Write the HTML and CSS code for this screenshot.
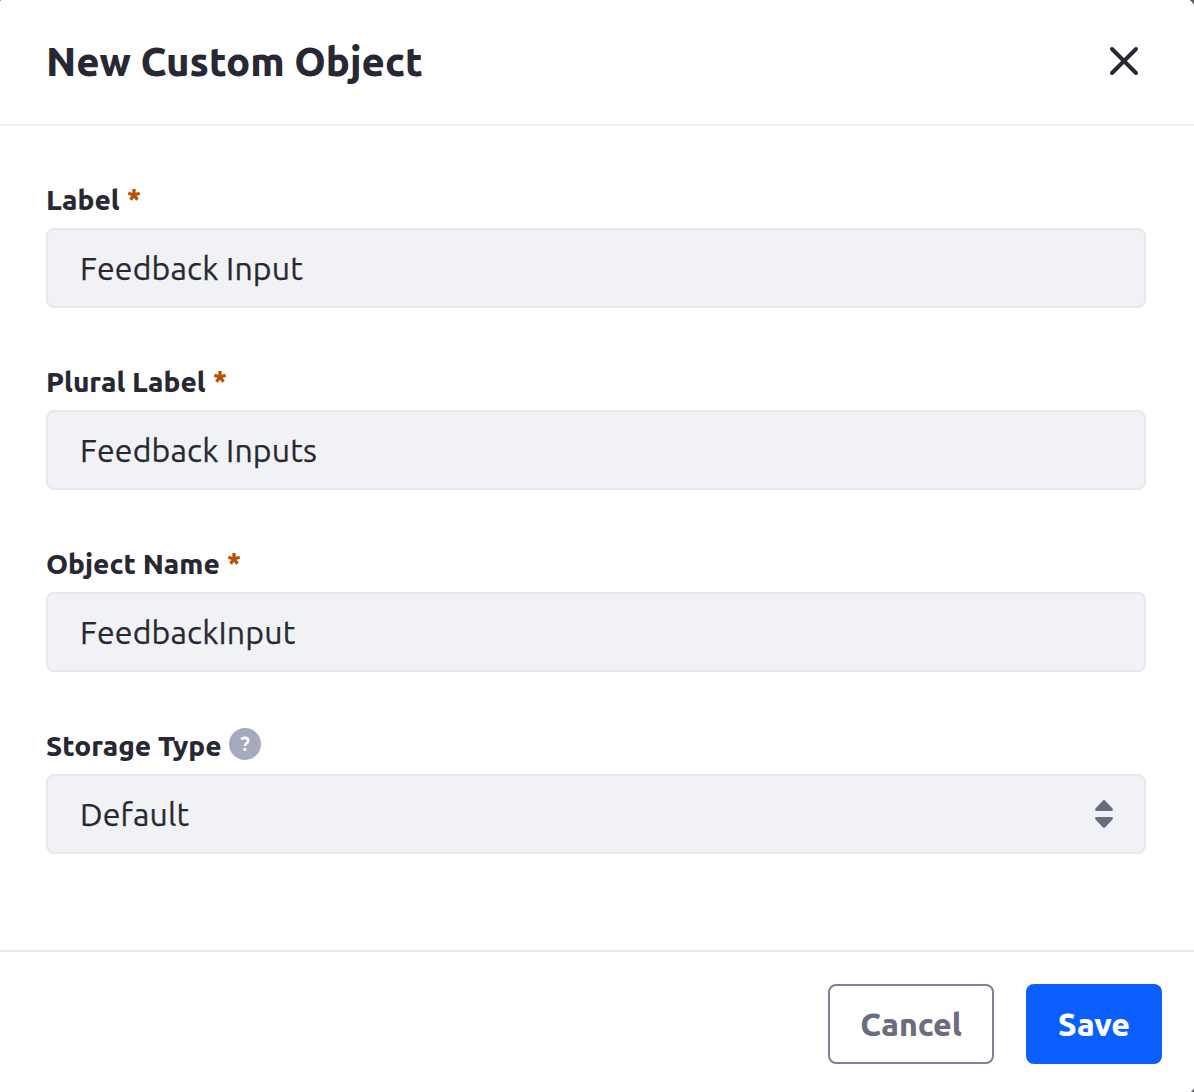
FILE: index.html
```html
<!DOCTYPE html>
<html lang="en">
<head>
<meta charset="utf-8">
<title>New Custom Object</title>
<link rel="stylesheet" href="styles.css">
</head>
<body>
<form class="modal">
  <header class="modal-header">
    <h1 class="modal-title">New Custom Object</h1>
    <button class="close" type="button" aria-label="Close">
      <svg width="32" height="32" viewBox="0 0 32 32"><path d="M4 4L28 28M28 4L4 28"/></svg>
    </button>
  </header>
  <main class="modal-body">
    <div class="field">
      <label class="field-label"><span>Label</span><svg class="required" viewBox="0 0 12 12"><path d="M6 6V0M6 6L.3 4.2M6 6L11.7 4.2M6 6L2.5 10.7M6 6L9.5 10.7"/></svg></label>
      <div class="control"><span>Feedback Input</span></div>
    </div>
    <div class="field">
      <label class="field-label"><span>Plural Label</span><svg class="required" viewBox="0 0 12 12"><path d="M6 6V0M6 6L.3 4.2M6 6L11.7 4.2M6 6L2.5 10.7M6 6L9.5 10.7"/></svg></label>
      <div class="control"><span>Feedback Inputs</span></div>
    </div>
    <div class="field">
      <label class="field-label"><span>Object Name</span><svg class="required" viewBox="0 0 12 12"><path d="M6 6V0M6 6L.3 4.2M6 6L11.7 4.2M6 6L2.5 10.7M6 6L9.5 10.7"/></svg></label>
      <div class="control"><span>FeedbackInput</span></div>
    </div>
    <div class="field">
      <label class="field-label"><span>Storage Type</span><svg class="help" viewBox="0 0 32 32"><circle cx="16" cy="16" r="16"/><path d="M12.2 11.4C13 10.3 14.3 9.9 15.8 9.9C18 9.9 19.3 11 19.3 12.7C19.3 15.1 15.9 15.2 15.9 18.1"/><rect x="14.4" y="20.1" width="3" height="3" rx=".8"/></svg></label>
      <div class="control"><span>Default</span>
        <svg class="arrows" width="18" height="28" viewBox="0 0 18 28"><path d="M8 .5Q9 -.4 10 .5L17.5 8.6Q18.6 11 16.5 11H1.5Q-.6 11 .5 8.6ZM8 27.5Q9 28.4 10 27.5L17.5 19.4Q18.6 17 16.5 17H1.5Q-.6 17 .5 19.4Z"/></svg>
      </div>
    </div>
  </main>
  <footer class="modal-footer">
    <button class="button cancel" type="button"><span>Cancel</span></button>
    <button class="button save" type="button"><span>Save</span></button>
  </footer>
</form>
</body>
</html>
```
FILE: styles.css
```css
* { box-sizing: border-box; }

body {
  margin: 0;
  height: 1092px;
  overflow: hidden;
  background: #5b5b68;
  color: #272833;
  font-family: Ubuntu, "Noto Sans", sans-serif;
}

.modal {
  display: flex;
  flex-direction: column;
  height: 1097px;
  margin: -2px -1px 0 -4px;
  padding: 2px 1px 0 4px;
  border-radius: 12px;
  background: #fff;
}

.modal-header {
  display: flex;
  align-items: center;
  justify-content: space-between;
  height: 126px;
  padding: 0 54px 2px 46px;
  border-bottom: 2px solid #f1f2f5;
}

.modal-title {
  margin: 0;
  padding-top: 2px;
  font-size: 40px;
  line-height: 50px;
  font-weight: 800;
  white-space: nowrap;
}

.close {
  display: flex;
  padding: 0;
  border: 0;
  background: none;
}

.close path { fill: none; stroke: #272833; stroke-width: 4; stroke-linecap: round; }

.modal-body {
  display: flex;
  flex-direction: column;
  gap: 56px;
  height: 824px;
  padding: 56px 48px 0 46px;
}

.field-label {
  display: flex;
  align-items: center;
  height: 46px;
  padding-bottom: 10px;
  font-size: 28px;
  font-weight: 800;
  line-height: 36px;
  white-space: nowrap;
}

.required {
  width: 12px;
  height: 12px;
  margin: -10px 0 0 8px;
  overflow: visible;
}

.required path { fill: none; stroke: #b95000; stroke-width: 3.2; }

.help { width: 32px; height: 32px; margin: -4px 0 0 7px; }
.help circle { fill: #a7a9bc; }
.help path { fill: none; stroke: #fff; stroke-width: 2.6; }
.help rect { fill: #fff; }

.control {
  display: flex;
  align-items: center;
  justify-content: space-between;
  height: 80px;
  padding: 0 31px 0 32px;
  border: 2px solid #e7e7ed;
  border-radius: 8px;
  background: #f1f2f5;
  font-size: 32px;
  font-weight: 400;
  letter-spacing: 0.18px;
  -webkit-text-stroke: 0.25px #272833;
  line-height: 48px;
}

.arrows { fill: #6b6c7e; }

.modal-footer {
  display: flex;
  justify-content: flex-end;
  gap: 32px;
  height: 145px;
  padding: 32px 32px 0;
  border-top: 2px solid #e7e7ed;
}

.button {
  display: flex;
  align-items: center;
  justify-content: center;
  height: 80px;
  padding: 0;
  border-radius: 8px;
  font: 800 32px/48px Ubuntu, "Noto Sans", sans-serif;
}

.cancel { width: 166px; border: 2px solid #857f96; background: #fff; color: #6b6c7e; }
.save { width: 136px; border: 0; background: #0b5fff; color: #fff; }
```
